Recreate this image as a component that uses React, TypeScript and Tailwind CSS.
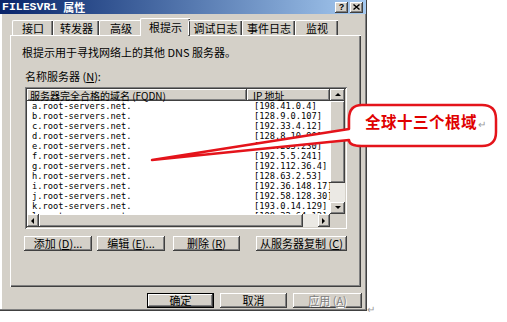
import React from "react";

const raised =
  "bg-[#d4d0c8] shadow-[inset_-1px_-1px_0_#404040,inset_1px_1px_0_#ffffff,inset_-2px_-2px_0_#808080]";

const tabs = [
  { label: "接口", w: "w-[41px]" },
  { label: "转发器", w: "w-[46px]" },
  { label: "高级", w: "w-[43px]" },
  { label: "根提示", w: "w-[50px]", active: true },
  { label: "调试日志", w: "w-[54px]" },
  { label: "事件日志", w: "w-[53px]" },
  { label: "监视", w: "w-[43px]" },
];

const servers = [
  ["a", "198.41.0.4"],
  ["b", "128.9.0.107"],
  ["c", "192.33.4.12"],
  ["d", "128.8.10.90"],
  ["e", "192.203.230"],
  ["f", "192.5.5.241"],
  ["g", "192.112.36.4"],
  ["h", "128.63.2.53"],
  ["i", "192.36.148.17"],
  ["j", "192.58.128.30"],
  ["k", "193.0.14.129"],
  ["l", "198.32.64.12"],
];

const Arrow = ({ dir }: { dir: "up" | "down" | "left" | "right" }) => {
  const pts: any = {
    up: "1,5 4,2 7,5",
    down: "1,2 4,5 7,2",
    left: "5,1 2,4 5,7",
    right: "2,1 5,4 2,7",
  };
  return (
    <svg width="8" height="8" viewBox="0 0 8 8">
      <polygon points={pts[dir]} fill="#000" />
    </svg>
  );
};

const Btn = ({ w, children, dim }: any) => (
  <div
    className={`${w} h-[15px] ${raised} flex items-center justify-center text-[11px] leading-none ${
      dim ? "text-[#808080] [text-shadow:1px_1px_0_#ffffff]" : "text-black"
    }`}
  >
    {children}
  </div>
);

const App = () => {
  return (
    <div className="relative w-[507px] h-[322px] bg-white overflow-hidden font-['Noto_Sans_CJK_SC',sans-serif]">
      {/* dialog */}
      <div className="w-[367px] h-[311px] flex flex-col bg-[#d4d0c8] shadow-[inset_-1px_-1px_0_#404040,inset_-2px_-2px_0_#808080,inset_2px_0_0_#ffffff]">
        {/* title bar */}
        <div className="h-[14px] w-[366px] flex items-center justify-between bg-gradient-to-r from-[#0a246a] to-[#a6caf0] pl-[2px] pr-[3px]">
          <div className="flex items-center gap-[6px] text-white font-bold text-[11px] leading-[12px]">
            <span className="font-['Liberation_Mono',monospace] text-[11.5px]">FILESVR1</span>
            <span>属性</span>
          </div>
          <div className="flex gap-[2px]">
            <div className={`w-[13px] h-[11px] ${raised} flex items-center justify-center text-[9px] font-bold leading-none font-['Liberation_Sans',sans-serif]`}>
              ?
            </div>
            <div className={`w-[13px] h-[11px] ${raised} flex items-center justify-center`}>
              <svg width="7" height="6" viewBox="0 0 7 6">
                <path d="M0.5 0.5 L6.5 5.5 M6.5 0.5 L0.5 5.5" stroke="#000" strokeWidth="1.4" />
              </svg>
            </div>
          </div>
        </div>

        {/* tabs */}
        <div className="flex items-end pl-[12px] mt-[4px] h-[17px] relative z-10">
          {tabs.map((t) =>
            t.active ? (
              <div
                key={t.label}
                className={`${t.w} -mx-[2px] h-[18px] -mb-[1px] bg-[#d4d0c8] border-t border-l border-white rounded-tl-[2px] shadow-[inset_-1px_0_0_#404040,inset_-2px_0_0_#808080] flex items-center justify-center text-[11px] leading-none`}
              >
                {t.label}
              </div>
            ) : (
              <div
                key={t.label}
                className={`${t.w} h-[15px] border-t border-l border-white rounded-tl-[2px] shadow-[inset_-1px_0_0_#404040,inset_-2px_0_0_#808080] flex items-center justify-center text-[11px] leading-none`}
              >
                {t.label}
              </div>
            )
          )}
        </div>

        {/* panel */}
        <div className="ml-[10px] w-[351px] h-[252px] border-t border-l border-white shadow-[inset_-1px_-1px_0_#404040,inset_-2px_-2px_0_#808080] flex flex-col">
          <div className="ml-[11px] mt-[10px] text-[11px] leading-[12px]">
            根提示用于寻找网络上的其他 DNS 服务器。
          </div>
          <div className="ml-[14px] mt-[12px] text-[11px] leading-[12px]">
            名称服务器 (<u>N</u>):
          </div>

          {/* list */}
          <div className="ml-[14px] mt-[5px] w-[322px] h-[142px] bg-white p-[2px] shadow-[inset_1px_1px_0_#808080,inset_-1px_-1px_0_#ffffff,inset_2px_2px_0_#404040,inset_-2px_-2px_0_#d4d0c8] flex flex-col">
            <div className="flex h-[125px]">
              <div className="w-[303px] flex flex-col overflow-hidden">
                <div className="flex h-[12px] shrink-0 text-[10px] leading-[11px]">
                  <div className={`w-[220px] ${raised} flex items-center pl-[3px] whitespace-nowrap`}>
                    服务器完全合格的域名 (FQDN)
                  </div>
                  <div className={`w-[83px] ${raised} flex items-center pl-[6px] whitespace-nowrap`}>
                    IP 地址
                  </div>
                </div>
                <div className="font-['DejaVu_Sans_Mono',monospace] text-[8.7px] leading-[10px] text-black">
                  {servers.map(([n, ip]) => (
                    <div key={n} className="flex h-[10px]">
                      <div className="w-[220px] pl-[5px] whitespace-nowrap">{n}.root-servers.net.</div>
                      <div className="w-[83px] pl-[7px] whitespace-nowrap overflow-hidden">[{ip}]</div>
                    </div>
                  ))}
                </div>
              </div>
              {/* vertical scrollbar */}
              <div className="w-[15px] flex flex-col">
                <div className={`h-[12px] ${raised} flex items-center justify-center`}>
                  <Arrow dir="up" />
                </div>
                <div className={`h-[82px] ${raised}`} />
                <div className="h-[19px] bg-[#ebe9e4]" />
                <div className={`h-[12px] ${raised} flex items-center justify-center`}>
                  <Arrow dir="down" />
                </div>
              </div>
            </div>
            {/* horizontal scrollbar */}
            <div className="flex h-[13px]">
              <div className={`w-[12px] ${raised} flex items-center justify-center`}>
                <Arrow dir="left" />
              </div>
              <div className={`w-[264px] ${raised}`} />
              <div className="w-[15px] bg-[#ebe9e4]" />
              <div className={`w-[12px] ${raised} flex items-center justify-center`}>
                <Arrow dir="right" />
              </div>
              <div className="w-[15px] bg-[#d4d0c8]" />
            </div>
          </div>

          {/* buttons */}
          <div className="flex ml-[13px] mt-[7px]">
            <Btn w="w-[68px]">添加 (<u>D</u>)...</Btn>
            <div className="ml-[5px]">
              <Btn w="w-[68px]">编辑 (<u>E</u>)...</Btn>
            </div>
            <div className="ml-[8px]">
              <Btn w="w-[67px]">删除 (<u>R</u>)</Btn>
            </div>
            <div className="ml-[16px]">
              <Btn w="w-[91px]">从服务器复制 (<u>C</u>)</Btn>
            </div>
          </div>
        </div>

        {/* bottom buttons */}
        <div className="flex ml-[147px] mt-[6px] gap-[6px]">
          <div className="w-[67px] h-[15px] border border-black">
            <div className={`w-full h-full ${raised} flex items-center justify-center text-[11px] leading-none`}>
              确定
            </div>
          </div>
          <Btn w="w-[67px]">取消</Btn>
          <Btn w="w-[69px]" dim>
            应用 (<u>A</u>)
          </Btn>
        </div>
      </div>

      <div className="absolute left-[367px] top-[304px] text-[10px] leading-none text-[#9a9a9a]">↵</div>

      {/* annotation callout */}
      <svg className="absolute left-0 top-0 pointer-events-none" width="507" height="322" viewBox="0 0 507 322">
        <path
          d="M362 105 H482 Q496 105 496 119 V132 Q496 146 482 146 H362 Q349 146 349 140 L152 160 L349 129 V119 Q349 105 362 105 Z"
          fill="#ffffff"
          stroke="#e4141b"
          strokeWidth="2.5"
          strokeLinejoin="round"
        />
      </svg>
      <div className="absolute left-[365px] top-[114px] flex items-center text-[15.5px] leading-none font-bold text-[#e00000] tracking-[0.5px]">
        全球十三个根域
        <span className="text-[10px] text-[#9a9a9a] font-normal ml-[1px] mt-[4px]">↵</span>
      </div>
    </div>
  );
};

export default App;
